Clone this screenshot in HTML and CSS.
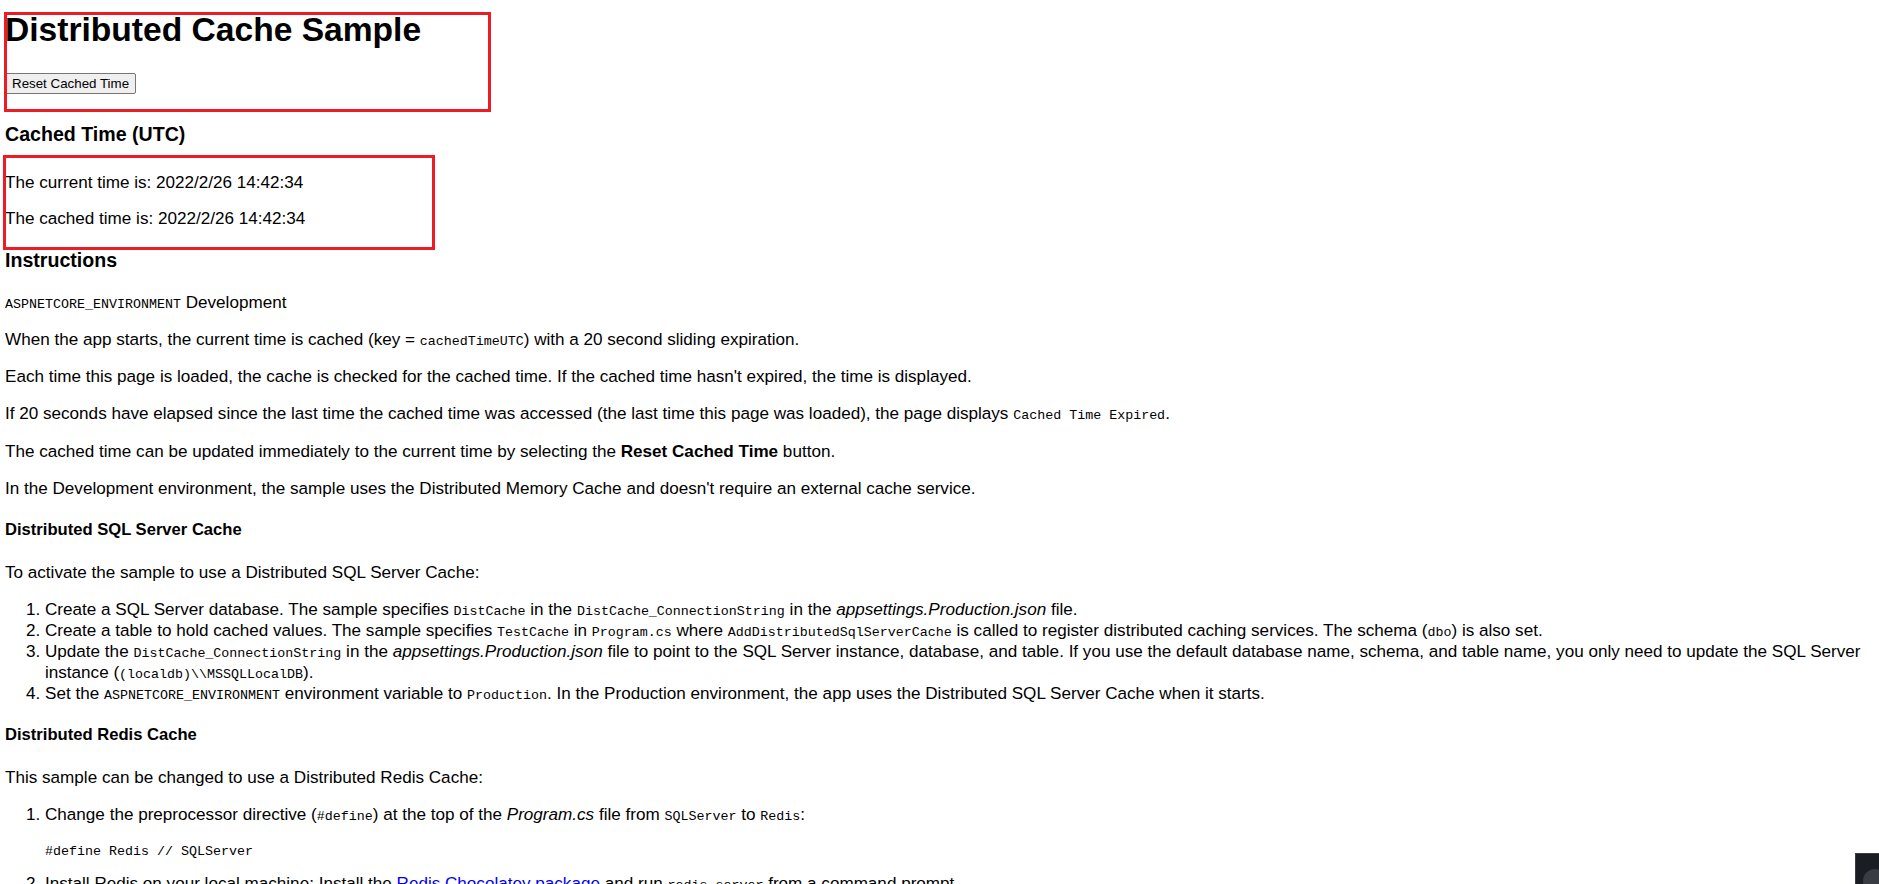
FILE: index.html
```html
<!DOCTYPE html>
<html>
<head>
<meta name="viewport" content="width=device-width, initial-scale=1">
<title>Distributed Cache Sample</title>
<link rel="stylesheet" href="styles.css">
</head>
<body>

<h1>Distributed Cache Sample</h1>
<form class="reset-form">
  <button type="button" class="btn">Reset Cached Time</button>
</form>

<h3 class="cached-title">Cached Time (UTC)</h3>
<div class="times">
  <p>The current time is: 2022/2/26 14:42:34</p>
  <p>The cached time is: 2022/2/26 14:42:34</p>
</div>

<h3 class="instr-title">Instructions</h3>
<div class="instructions">
  <p><code>ASPNETCORE_ENVIRONMENT</code> Development</p>
  <p>When the app starts, the current time is cached (key = <code>cachedTimeUTC</code>) with a 20 second sliding expiration.</p>
  <p>Each time this page is loaded, the cache is checked for the cached time. If the cached time hasn't expired, the time is displayed.</p>
  <p>If 20 seconds have elapsed since the last time the cached time was accessed (the last time this page was loaded), the page displays <code>Cached Time Expired</code>.</p>
  <p>The cached time can be updated immediately to the current time by selecting the <strong>Reset Cached Time</strong> button.</p>
  <p>In the Development environment, the sample uses the Distributed Memory Cache and doesn't require an external cache service.</p>

  <h4>Distributed SQL Server Cache</h4>
  <p>To activate the sample to use a Distributed SQL Server Cache:</p>
  <ol>
    <li>Create a SQL Server database. The sample specifies <code>DistCache</code> in the <code>DistCache_ConnectionString</code> in the <em>appsettings.Production.json</em> file.</li>
    <li>Create a table to hold cached values. The sample specifies <code>TestCache</code> in <code>Program.cs</code> where <code>AddDistributedSqlServerCache</code> is called to register distributed caching services. The schema (<code>dbo</code>) is also set.</li>
    <li>Update the <code>DistCache_ConnectionString</code> in the <em>appsettings.Production.json</em> file to point to the SQL Server instance, database, and table. If you use the default database name, schema, and table name, you only need to update the SQL Server instance (<code>(localdb)\\MSSQLLocalDB</code>).</li>
    <li>Set the <code>ASPNETCORE_ENVIRONMENT</code> environment variable to <code>Production</code>. In the Production environment, the app uses the Distributed SQL Server Cache when it starts.</li>
  </ol>

  <h4>Distributed Redis Cache</h4>
  <p>This sample can be changed to use a Distributed Redis Cache:</p>
  <ol class="redis-list">
    <li>
      <p>Change the preprocessor directive (<code>#define</code>) at the top of the <em>Program.cs</em> file from <code>SQLServer</code> to <code>Redis</code>:</p>
      <pre>#define Redis // SQLServer</pre>
    </li>
    <li>Install Redis on your local machine: Install the <a href="#">Redis Chocolatey package</a> and run <code>redis-server</code> from a command prompt.</li>
  </ol>
</div>

<!-- red marks drawn over the screenshot -->
<div class="mark mark-top"></div>
<div class="mark mark-times"></div>

<div class="corner-widget"><span class="corner-dot"></span></div>

</body>
</html>
```

FILE: styles.css
```css
html {
  overflow: hidden;
}

body {
  margin: 0 8px 0 5px;
  font-family: "Liberation Sans", Arial, sans-serif;
  font-size: 16px;
  color: #000;
  background: #fff;
}

/* Header */
h1 {
  margin: 10px 0 0;
  font-size: 33.6px;
  line-height: 40px;
  font-weight: bold;
}

.reset-form {
  display: flex;
  margin: 23px 0 0;
}

.btn {
  height: 21px;
  padding: 1px 6px;
  font-family: "Liberation Sans", Arial, sans-serif;
  font-size: 13.33px;
  color: #000;
  background: #efefef;
  border: 1px solid #767676;
  border-radius: 2px;
}

h3 {
  font-size: 19.6px;
  line-height: 22px;
  font-weight: bold;
}

.cached-title {
  margin: 29px 0 0;
}

/* Time display */
.times {
  margin-top: 27px;
}

.times p {
  margin: 0;
  font-size: 17.1px;
  line-height: 21px;
}

.times p + p {
  margin-top: 15px;
}

.instr-title {
  margin: 20px 0 0;
}

/* Instructions */
.instructions {
  font-size: 17.1px;
}

.instructions p {
  margin: 16px 0;
  line-height: 21.3px;
}

.instructions > p:first-child {
  margin-top: 20.5px;
}

code,
pre {
  font-family: "Liberation Mono", "Courier New", monospace;
  font-size: 13.33px;
}

/* keep the mono font from stretching the line box */
code {
  line-height: 1;
}

h4 {
  margin: 20px 0 21.5px;
  font-size: 16.6px;
  line-height: 21.3px;
  font-weight: bold;
}

ol {
  margin: 16px 0;
  padding-left: 40px;
  line-height: 21px;
}

.redis-list li > p {
  margin: 0;
  line-height: 21px;
}

.redis-list pre {
  margin: 19px 0 14px;
  line-height: 15px;
}

a {
  color: #0000ee;
}

/* Red annotation boxes */
.mark {
  position: absolute;
  box-sizing: border-box;
  border: 3px solid #ed1c24;
}

.mark-top {
  left: 4px;
  top: 12px;
  width: 487px;
  height: 100px;
}

.mark-times {
  left: 3px;
  top: 155px;
  width: 432px;
  height: 95px;
}

/* Dark widget peeking in the corner */
.corner-widget {
  position: absolute;
  right: 0;
  top: 853px;
  width: 24px;
  height: 31px;
  box-sizing: border-box;
  background: #1b1d24;
  border-top: 1px solid #3b3d44;
  border-left: 1px solid #3b3d44;
  overflow: hidden;
}

.corner-dot {
  position: absolute;
  left: 7px;
  top: 15px;
  width: 24px;
  height: 24px;
  border-radius: 50%;
  background: #3a3c43;
}
```
